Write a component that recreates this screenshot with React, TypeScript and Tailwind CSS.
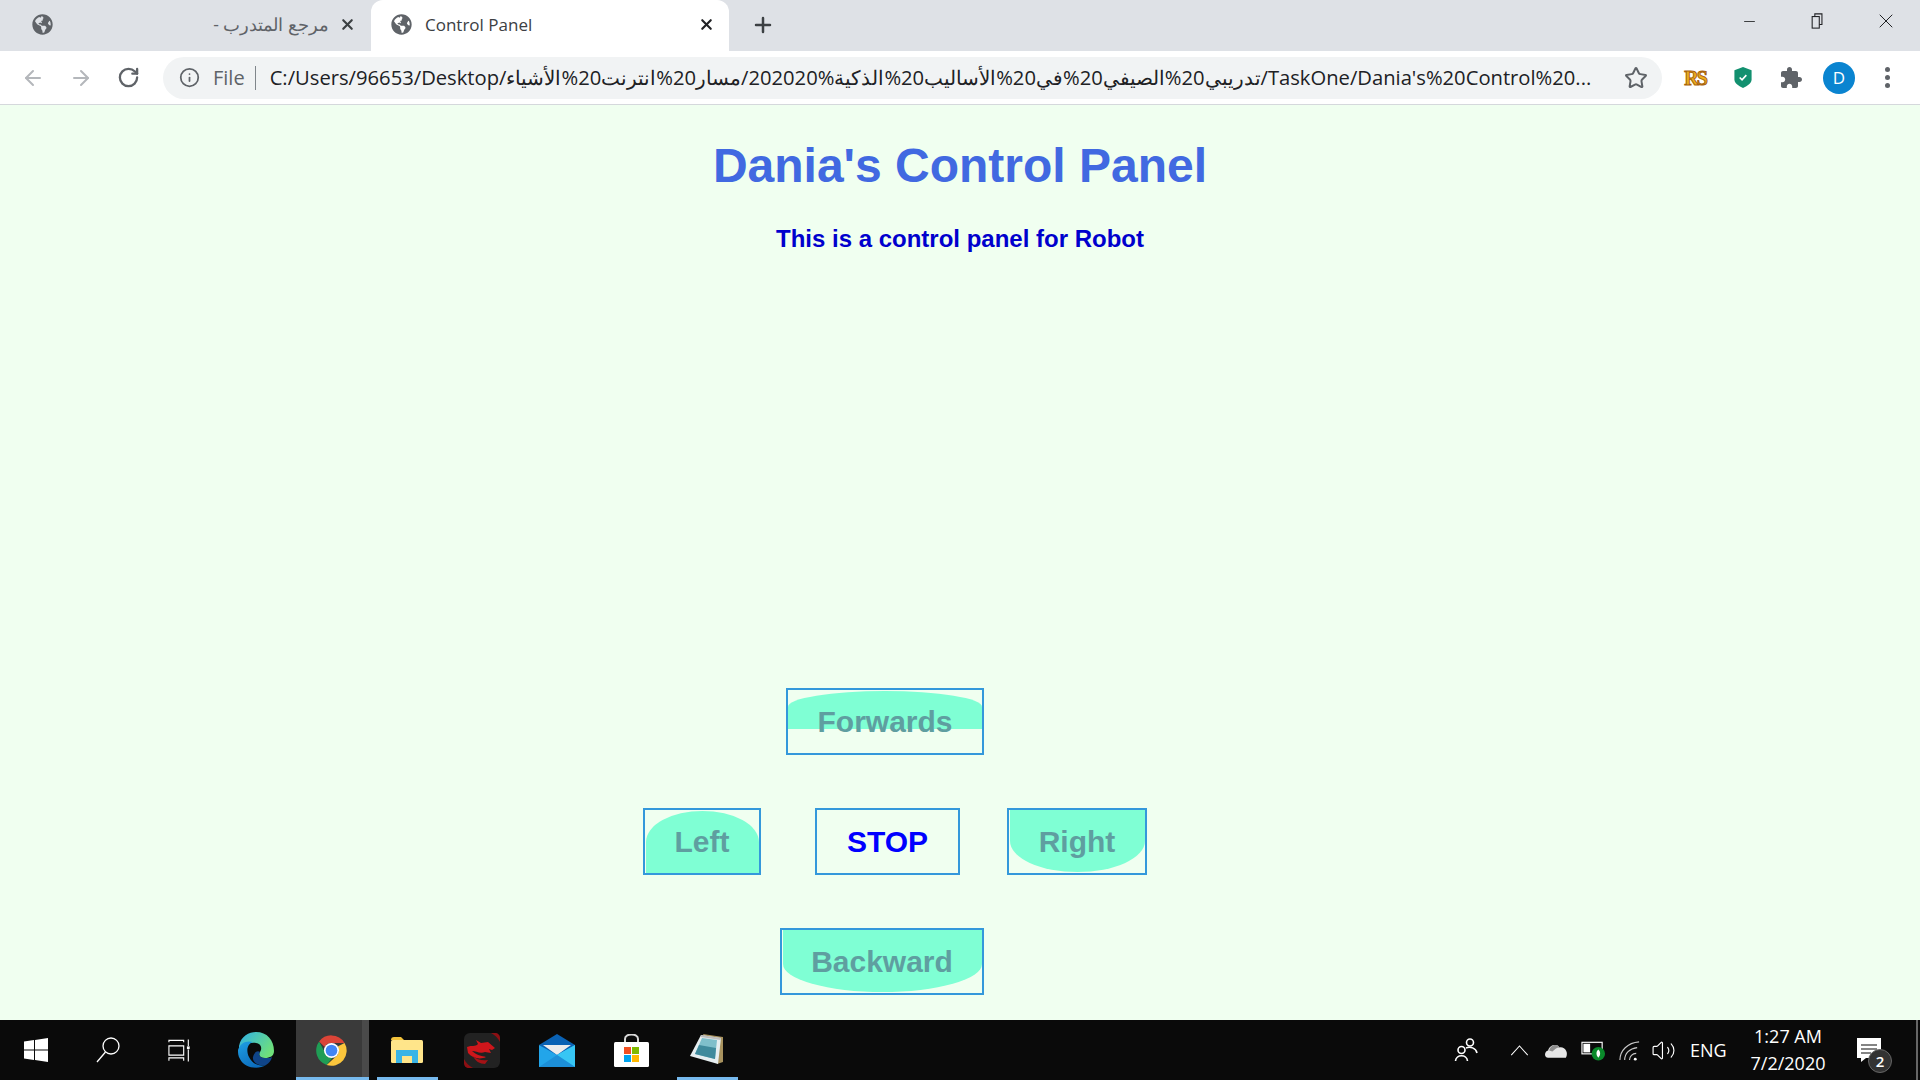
import React from 'react';
import { ArrowLeft, ArrowRight, RotateCw, Info, Star, X, Plus, Minus, Volume2 } from 'lucide-react';
import { FaGlobeAmericas } from 'react-icons/fa';

const uiFont = "[font-family:'Open_Sans','Noto_Sans_CJK_SC',sans-serif]";

const GlobeIcon = () => <FaGlobeAmericas className="w-[21px] h-[21px] text-[#5f6368] shrink-0" />;

const Tab: React.FC<{ label: string }> = ({ label }) => (
  <div className="flex items-center h-[51px] w-[358px] pl-[20px] pr-[14px] pb-[2px] bg-white rounded-t-[12px]">
    <GlobeIcon />
    <span className="flex-1 text-[17px] text-[#3c4043] pl-[13px]">{label}</span>
    <X className="w-[17px] h-[17px] ml-[10px] text-[#202124]" strokeWidth={3} />
  </div>
);

const UrlText = () => (
  <span className="text-[20.2px] text-[#202124] whitespace-nowrap" dir="ltr">
    C:/Users/96653/Desktop/<bdi>الأشياء</bdi>%20<bdi>انترنت</bdi>%20<bdi>مسار</bdi>/202020%<bdi>الذكية</bdi>%20<bdi>الأساليب</bdi>%20<bdi>في</bdi>%20<bdi>الصيفي</bdi>%20<bdi>تدريبي</bdi>/TaskOne/Dania's%20Control%20...
  </span>
);

const ShieldIcon = () => (
  <svg viewBox="0 0 18 22" className="w-[18px] h-[21px]">
    <path d="M9 0 L18 3.5 V13 C18 17 13 20 9 22 C5 20 0 17 0 13 V3.5 Z" fill="#12906f" />
    <path d="M5.5 11 L8 13.5 L12.5 8.5" fill="none" stroke="#fff" strokeWidth="1.7" />
  </svg>
);

const RsLogo = () => (
  <span className="[font-family:'Liberation_Serif',serif] font-bold text-[20px] tracking-[-2px] text-[#eeb01e] [-webkit-text-stroke:1px_#a8620c]">RS</span>
);

const ExtensionIcon = () => (
  <svg viewBox="0 0 24 24" className="w-[24px] h-[24px]" fill="#5f6368">
    <path d="M20.5 11H19V7c0-1.1-.9-2-2-2h-4V3.5C13 2.12 11.88 1 10.5 1S8 2.12 8 3.5V5H4c-1.1 0-1.99.9-1.99 2v3.8H3.5c1.49 0 2.7 1.21 2.7 2.7s-1.21 2.7-2.7 2.7H2V20c0 1.1.9 2 2 2h3.8v-1.5c0-1.49 1.21-2.7 2.7-2.7 1.49 0 2.7 1.21 2.7 2.7V22H17c1.1 0 2-.9 2-2v-4h1.5c1.38 0 2.5-1.12 2.5-2.5S21.88 11 20.5 11z" />
  </svg>
);

const ToolbarCell: React.FC<{ children: React.ReactNode }> = ({ children }) => (
  <div className="w-[48px] flex items-center justify-center">{children}</div>
);

const BrowserChrome = () => (
  <div className={`${uiFont} shrink-0`}>
    <div className="flex h-[51px] bg-[#dee1e6]">
      <div className="w-[371px] flex items-center pl-[32px] pr-[15px] pb-[2px]">
        <GlobeIcon />
        <span dir="rtl" className="flex-1 text-[17.5px] text-[#5f6368]">مرجع المتدرب -</span>
        <X className="w-[17px] h-[17px] ml-[10px] text-[#3c4043]" strokeWidth={3} />
      </div>
      <Tab label="Control Panel" />
      <div className="flex items-center pl-[22px] pb-[2px]">
        <Plus className="w-[24px] h-[24px] text-[#3c4043]" strokeWidth={2.5} />
      </div>
      <div className="ml-auto flex items-start">
        <div className="w-[68px] h-[42px] flex items-center justify-center pr-[2px]"><Minus className="w-[17px] h-[17px] text-[#202124]" strokeWidth={1.2} /></div>
        <div className="w-[68px] h-[42px] flex items-center justify-center pr-[2px]">
          <svg viewBox="0 0 14 18" className="w-[13px] h-[16px]" fill="none" stroke="#202124" strokeWidth="1.2">
            <rect x="1" y="4" width="8" height="13" />
            <path d="M4 4 V1 H12 V13 H9" />
          </svg>
        </div>
        <div className="w-[68px] h-[42px] flex items-center justify-center"><X className="w-[24px] h-[24px] text-[#202124]" strokeWidth={1} /></div>
      </div>
    </div>
    <div className="flex items-center h-[54px] bg-white border-b border-[#d5d8dc]">
      <div className="flex items-center w-[163px] pl-[21px] gap-[24px]">
        <ArrowLeft className="w-[24px] h-[24px] text-[#b4b7bb]" strokeWidth={2} />
        <ArrowRight className="w-[24px] h-[24px] text-[#b4b7bb]" strokeWidth={2} />
        <RotateCw className="w-[23px] h-[23px] text-[#5f6368]" strokeWidth={2.4} />
      </div>
      <div className="flex items-center h-[42px] w-[1499px] bg-[#f1f3f4] rounded-full pl-[16px] pr-[14px] overflow-hidden">
        <Info className="w-[21px] h-[21px] text-[#5f6368] shrink-0" strokeWidth={2} />
        <span className="ml-[13px] text-[20px] text-[#5f6368]">File</span>
        <span className="ml-[10px] mr-[14px] w-px h-[24px] bg-[#80868b] shrink-0" />
        <UrlText />
        <Star className="ml-auto w-[24px] h-[24px] text-[#5f6368] shrink-0" strokeWidth={2} />
      </div>
      <div className="flex items-center pl-[9px]">
        <ToolbarCell><RsLogo /></ToolbarCell>
        <ToolbarCell><ShieldIcon /></ToolbarCell>
        <ToolbarCell><ExtensionIcon /></ToolbarCell>
        <ToolbarCell>
          <div className="w-[32px] h-[32px] rounded-full bg-[#0a84d0] text-white text-[17px] flex items-center justify-center">D</div>
        </ToolbarCell>
        <ToolbarCell>
          <div className="flex flex-col gap-[3px]">
            <span className="w-[5px] h-[5px] rounded-full bg-[#5f6368]" />
            <span className="w-[5px] h-[5px] rounded-full bg-[#5f6368]" />
            <span className="w-[5px] h-[5px] rounded-full bg-[#5f6368]" />
          </div>
        </ToolbarCell>
      </div>
    </div>
  </div>
);

// fillClass says which part of the box the aquamarine shape covers
const RobotButton: React.FC<{
  label: string;
  widthClass: string;
  fillClass?: string;
  textClass?: string;
}> = ({ label, widthClass, fillClass, textClass = 'text-[#5f9ea0]' }) => (
  <div className={`relative h-[67px] border-2 border-[#3498db] flex items-center justify-center ${widthClass}`}>
    {fillClass && <div className={`absolute bg-[#7fffd4] ${fillClass}`} />}
    <span className={`relative text-[30px] font-bold ${textClass}`}>{label}</span>
  </div>
);

const ControlPanelPage = () => (
  <div className="flex-1 bg-[#f0fff0] [font-family:'Liberation_Sans',Arial,sans-serif] overflow-hidden">
    <h1 className="text-center text-[48px] leading-[55px] font-bold text-[#4169e1] mt-[33px]">Dania's Control Panel</h1>
    <p className="text-center text-[24px] leading-[28px] font-bold text-[#0000cd] mt-[32px]">This is a control panel for Robot</p>
    <div className="ml-[786px] mt-[435px]">
      <RobotButton label="Forwards" widthClass="w-[198px]" fillClass="left-0 right-0 top-[1px] h-[38px] rounded-[50%_50%_0_0/42%_42%_0_0]" />
    </div>
    <div className="flex ml-[643px] mt-[53px]">
      <RobotButton label="Left" widthClass="w-[118px]" fillClass="left-[1px] right-0 top-[1px] bottom-0 rounded-t-[50%]" />
      <RobotButton label="STOP" widthClass="w-[145px] ml-[54px]" textClass="text-[#0000ff]" />
      <RobotButton label="Right" widthClass="w-[140px] ml-[47px]" fillClass="inset-x-[0.5px] top-0 bottom-[1px] rounded-b-[50%]" />
    </div>
    <div className="ml-[780px] mt-[53px]">
      <RobotButton label="Backward" widthClass="w-[204px]" fillClass="inset-x-[0.5px] top-0 bottom-[1px] rounded-[0_0_50%_50%/0_0_45%_45%]" />
    </div>
  </div>
);

const EdgeIcon = () => (
  <svg viewBox="0 0 36 36" className="w-[36px] h-[36px]">
    <defs>
      <linearGradient id="edgeTop" x1="0" y1="0" x2="1" y2="0.6">
        <stop offset="0" stopColor="#2fb0e8" />
        <stop offset="1" stopColor="#6fe07a" />
      </linearGradient>
      <linearGradient id="edgeLeft" x1="0" y1="0" x2="0.6" y2="1">
        <stop offset="0" stopColor="#1f9fe4" />
        <stop offset="1" stopColor="#0c6cbc" />
      </linearGradient>
    </defs>
    <path d="M1 14 C3 4 11 0 18 0 C29 0 36 8 36 19 C36 24 32 26 27 26 C22 26 20 23 22 20 C24 17 24 12 18 11 C10 10 3 14 1 20 Z" fill="url(#edgeTop)" />
    <path d="M0 18 C2 11 8 8 15 10 C9 12 8 19 11 25 C14 31 20 35 28 33 C20 38 6 36 2 27 C0 24 0 21 0 18 Z" fill="url(#edgeLeft)" />
    <path d="M22 20 C20 23 22 26 27 26 C30 26 33 26 34 25 C33 29 31 31 28 33 C20 35 14 30 15 25 C16 21 19 18 22 20 Z" fill="#0f4488" />
  </svg>
);

const ChromeIcon = () => (
  <svg viewBox="0 0 48 48" className="w-[33px] h-[33px]">
    <path d="M24 2 A22 22 0 0 1 43 13 H24 A11 11 0 0 0 14 19 L6 11 A22 22 0 0 1 24 2 Z" fill="#db4437" />
    <path d="M6 11 L15 28 A11 11 0 0 0 25 35 L17 45 A22 22 0 0 1 6 11 Z" fill="#1f9d55" />
    <path d="M43 13 A22 22 0 0 1 17 45 L30 33 A11 11 0 0 0 33 18 Z" fill="#fbc63c" />
    <circle cx="24" cy="24" r="11" fill="#fff" />
    <circle cx="24" cy="24" r="8.5" fill="#4285f4" />
  </svg>
);

const FolderIcon = () => (
  <svg viewBox="0 0 32 26" className="w-[32px] h-[26px]">
    <path d="M0 3 C0 1 1 0 3 0 H10 L13 3 H0 Z" fill="#f3c33c" />
    <rect x="0" y="3" width="32" height="23" rx="1.5" fill="#ffe58a" />
    <path d="M5 26 V13 H27 V26 H21 V19 H11 V26 Z" fill="#3ab4e6" />
  </svg>
);

const MsiIcon = () => (
  <svg viewBox="0 0 36 35" className="w-[36px] h-[35px]">
    <rect x="0" y="0" width="36" height="35" rx="6" fill="#222" />
    <path d="M27 0 H31 C34 0 36 2 36 5 V9 C34 5 31 2 27 0 Z M0 26 C2 30 5 33 9 35 H5 C2 35 0 33 0 30 Z" fill="#8e0f13" />
    <path d="M3 14 C8 12 11 14 14 11 L12 7 L17 10 L24 9 L31 15 L28 17 L25 16 L27 20 L21 19 C16 21 12 18 8 18 C12 22 18 23 22 24 C16 27 8 25 4 20 Z" fill="#cf161b" />
    <path d="M9 23 C13 27 19 28 24 27 L21 31 C16 31 11 28 9 23 Z" fill="#a51216" />
  </svg>
);

const MailIcon = () => (
  <svg viewBox="0 0 36 33" className="w-[36px] h-[33px]">
    <path d="M0 11 L18 0 L36 11 L18 24 Z" fill="#0a62b4" />
    <path d="M4 11 H32 L18 21 Z" fill="#ececec" />
    <path d="M0 11 L18 21 L36 11 V33 H0 Z" fill="#22a5ea" />
    <path d="M18 21 L36 11 V33 Z" fill="#37c6f4" />
    <path d="M36 33 H18 L0 33 L18 21 L36 33 Z" fill="#1c8fd8" />
  </svg>
);

const StoreIcon = () => (
  <svg viewBox="0 0 35 33" className="w-[35px] h-[33px]">
    <path d="M11 9 V5 C11 -1 24 -1 24 5 V9" fill="none" stroke="#d8d8d8" strokeWidth="2" />
    <rect x="0" y="8" width="35" height="25" rx="1.5" fill="#fff" />
    <rect x="10" y="13" width="7" height="7" fill="#f25022" />
    <rect x="18" y="13" width="7" height="7" fill="#7fba00" />
    <rect x="10" y="21" width="7" height="7" fill="#00a4ef" />
    <rect x="18" y="21" width="7" height="7" fill="#ffb900" />
  </svg>
);

const NotepadIcon = () => (
  <svg viewBox="0 0 33 32" className="w-[33px] h-[32px]">
    <path d="M13 0 L33 3 V28 L27 30 Z" fill="#a8925e" />
    <path d="M11 1 L31 4 L28 30 L0 22 Z" fill="#e6eef0" />
    <path d="M12 4 L27 6 L25 25 L5 20 Z" fill="#7fbfcb" />
    <path d="M5 20 L25 25 L26 14 L9 11 Z" fill="#3f8a9c" />
    <path d="M11 1 L31 4 L30.5 6 L10.5 3 Z" fill="#bcbcbc" />
  </svg>
);

const Taskbar = () => (
  <div className={`${uiFont} shrink-0 h-[60px] bg-[#0a0a0a] flex items-center text-white`}>
    <div className="w-[72px] flex justify-center">
      <svg viewBox="0 0 24 24" className="w-[24px] h-[24px]" fill="#fff">
        <path d="M0 3.4 L10 2 V11.5 H0 Z M11 1.9 L24 0 V11.5 H11 Z M0 12.5 H10 V22 L0 20.6 Z M11 12.5 H24 V24 L11 22.1 Z" />
      </svg>
    </div>
    <div className="w-[72px] flex justify-center">
      <svg viewBox="0 0 24 26" className="w-[24px] h-[26px]" fill="none" stroke="#fff" strokeWidth="1.3">
        <circle cx="15" cy="9" r="8" />
        <path d="M9.5 15 L1 25" />
      </svg>
    </div>
    <div className="w-[72px] flex justify-center">
      <svg viewBox="0 0 26 24" className="w-[24px] h-[23px]" fill="none" stroke="#fff" strokeWidth="1.2">
        <path d="M1 3 V1 H17 V3 M1 7 H17 V17 H1 Z M1 23 V20 H17 V23 M22 0 V7 M22 11 V24" />
        <rect x="20.5" y="7.5" width="3" height="3" fill="#fff" stroke="none" />
      </svg>
    </div>
    <div className="w-[80px] flex justify-center"><EdgeIcon /></div>
    <div className="flex">
      <div className="relative w-[73px] h-[60px] bg-[#3a3a3a] flex items-center justify-center pr-[2px]">
        <ChromeIcon />
        <div className="absolute top-0 bottom-0 right-0 w-[7px] bg-[#4a4a4a]" />
        <div className="absolute bottom-0 inset-x-0 h-[3px] bg-[#76b9ed]" />
      </div>
      <div className="relative w-[75px] h-[60px] flex items-center justify-center">
        <FolderIcon />
        <div className="absolute bottom-0 left-[8px] right-[6px] h-[3px] bg-[#76b9ed]" />
      </div>
      <div className="w-[75px] h-[60px] flex items-center justify-center"><MsiIcon /></div>
      <div className="w-[75px] h-[60px] flex items-center justify-center"><MailIcon /></div>
      <div className="w-[75px] h-[60px] flex items-center justify-center"><StoreIcon /></div>
      <div className="relative w-[75px] h-[60px] flex items-center justify-center">
        <NotepadIcon />
        <div className="absolute bottom-0 left-[8px] right-[6px] h-[3px] bg-[#76b9ed]" />
      </div>
    </div>
    <div className="ml-auto flex items-center h-full">
      <svg viewBox="0 0 24 24" className="w-[24px] h-[24px] mr-[32px]" fill="none" stroke="#fff" strokeWidth="1.6">
        <circle cx="7.5" cy="12" r="3.5" /><path d="M1.5 23 C2 16 13 16 13.5 23" />
        <circle cx="16" cy="4.5" r="3.5" /><path d="M12 10 C16 8 22 10 23 15" />
      </svg>
      <svg viewBox="0 0 20 12" className="w-[19px] h-[11px] mr-[15px]" fill="none" stroke="#fff" strokeWidth="1.1">
        <path d="M1 11 L10 1 L19 11" />
      </svg>
      <svg viewBox="0 0 24 15" className="w-[25px] h-[16px] mr-[12px]">
        <path d="M4 15 C0 15 0 9 4 8 C5 2 13 1 15 5 C20 4 24 10 21 15 Z" fill="#e6e6e6" />
        <path d="M5 8 C6 2 13 1 15 5 C12 5 10 7 8 9 Z" fill="#8e8e8e" />
      </svg>
      <svg viewBox="0 0 26 24" className="w-[25px] h-[24px] mr-[12px]">
        <rect x="1" y="4" width="21" height="12" fill="none" stroke="#fff" strokeWidth="1.2" />
        <rect x="2.5" y="5.5" width="7" height="9" fill="#fff" />
        <circle cx="18" cy="16" r="7" fill="#0a8a2a" />
        <path d="M18 11.5 C21 14 20 18 18 20 C16 18 15 14 18 11.5 Z" fill="#fff" />
      </svg>
      <svg viewBox="0 0 24 24" className="w-[23px] h-[23px] mr-[10px]" fill="none" stroke="#c8c8c8" strokeWidth="1.2">
        <path d="M2 22 C2 12 10 4 22 3 M7 22 C7 15 12 10 20 9 M12 22 C12 18 15 15 19 15" />
        <circle cx="18" cy="21" r="1.5" fill="#fff" stroke="none" />
      </svg>
      <Volume2 className="w-[25px] h-[25px] mr-[14px]" strokeWidth={1.1} />
      <span className="text-[18px] w-[35px] mr-[24px]">ENG</span>
      <div className="flex flex-col items-center w-[78px] text-[18px] leading-[27px] mr-[30px]">
        <span>1:27 AM</span>
        <span>7/2/2020</span>
      </div>
      <div className="relative mr-[35px]">
        <svg viewBox="0 0 24 24" className="w-[24px] h-[24px]" fill="#fff">
          <path d="M0 0 H24 V20 H9 L4 24 V20 H0 Z" />
          <path d="M4 7 H20 M4 11 H20 M4 15 H14" stroke="#0a0a0a" strokeWidth="1.2" />
        </svg>
        <div className="absolute left-[11px] top-[11px] w-[24px] h-[24px] rounded-full bg-[#333] border border-[#666] flex items-center justify-center text-[15px] font-semibold">2</div>
      </div>
      <div className="w-[2px] h-full bg-[#666]" />
      <div className="w-[2px]" />
    </div>
  </div>
);

export default function App() {
  return (
    <div className="w-[1920px] h-[1080px] flex flex-col overflow-hidden">
      <BrowserChrome />
      <ControlPanelPage />
      <Taskbar />
    </div>
  );
}
